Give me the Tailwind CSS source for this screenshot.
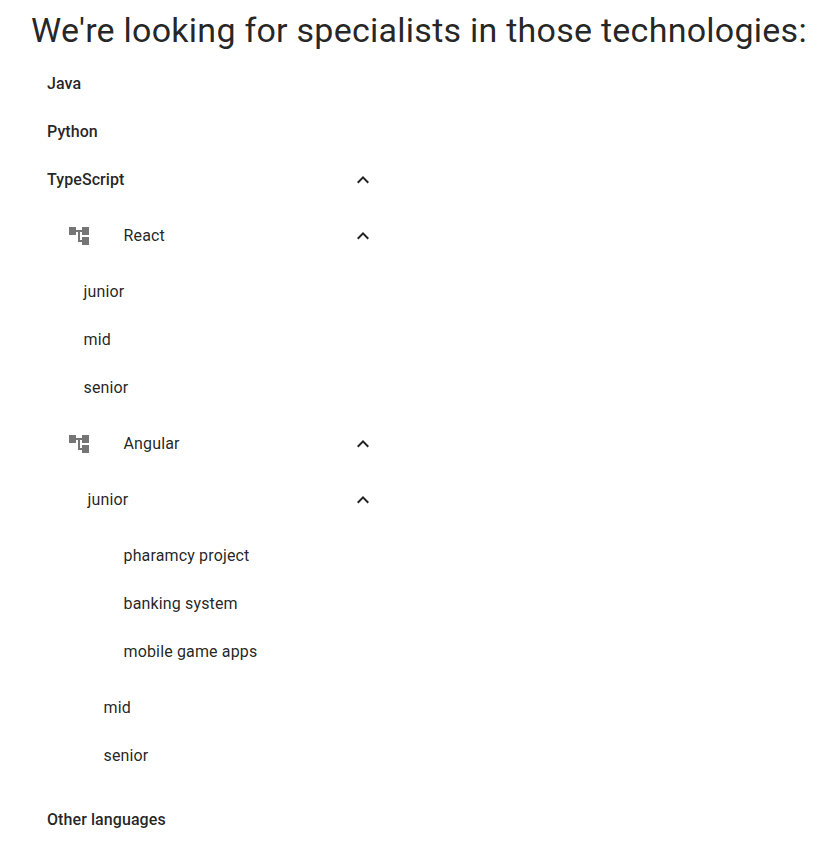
<!DOCTYPE html>
<html lang="en">
<head>
<meta charset="utf-8">
<title>Technologies</title>
<script src="https://cdn.jsdelivr.net/npm/@tailwindcss/browser@4"></script>
</head>
<body class="bg-white text-black/87 font-['Roboto',sans-serif]">
<svg class="hidden">
<symbol id="up" viewBox="0 0 24 24"><path d="m12 8-6 6 1.41 1.41L12 10.83l4.59 4.58L18 14z"/></symbol>
<symbol id="tree" viewBox="0 0 24 24"><path d="M22 11V3h-7v3H9V3H2v8h7V8h2v10h4v3h7v-8h-7v3h-2V8h2v3z"/></symbol>
</svg>
<main class="h-[858px] overflow-hidden">
<h1 class="h-[60px] pl-[31px] pt-[9px] text-[34px] leading-[42px] tracking-[0.25px] whitespace-nowrap">We're looking for specialists in those technologies:</h1>
<div class="w-[391px] text-base tracking-[0.15px]">
<div class="h-12 pl-[47px] flex items-center font-medium tracking-[0.08px]">Java</div>
<div class="h-12 pl-[47px] flex items-center font-medium tracking-[0.08px]">Python</div>
<div class="h-12 pl-[47px] pr-4 flex items-center font-medium tracking-[0.08px]"><span class="flex-1">TypeScript</span><svg class="size-6 fill-current"><use href="#up"/></svg></div>
<div class="h-16 pl-[67px] pr-4 flex items-center"><svg class="size-6 mr-[32.5px] fill-black/54"><use href="#tree"/></svg><span class="flex-1">React</span><svg class="size-6 fill-current"><use href="#up"/></svg></div>
<div class="h-12 pl-[83.5px] flex items-center">junior</div>
<div class="h-12 pl-[83.5px] flex items-center">mid</div>
<div class="h-12 pl-[83.5px] flex items-center">senior</div>
<div class="h-16 pl-[67px] pr-4 flex items-center"><svg class="size-6 mr-[32.5px] fill-black/54"><use href="#tree"/></svg><span class="flex-1">Angular</span><svg class="size-6 fill-current"><use href="#up"/></svg></div>
<div class="h-12 pl-[87.5px] pr-4 flex items-center"><span class="flex-1">junior</span><svg class="size-6 fill-current"><use href="#up"/></svg></div>
<div class="h-12 mt-2 pl-[123.5px] flex items-center">pharamcy project</div>
<div class="h-12 pl-[123.5px] flex items-center">banking system</div>
<div class="h-12 pl-[123.5px] flex items-center">mobile game apps</div>
<div class="h-12 mt-2 pl-[103.5px] flex items-center">mid</div>
<div class="h-12 pl-[103.5px] flex items-center">senior</div>
<div class="h-12 mt-4 pl-[47px] flex items-center font-medium tracking-[0.08px]">Other languages</div>
</div>
</main>
</body>
</html>
